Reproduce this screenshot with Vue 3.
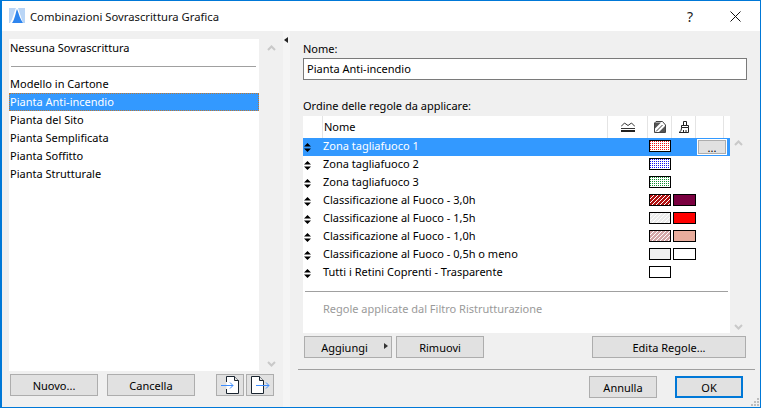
<template>
  <div class="win">
    <header class="title">
      <svg class="logo" width="16" height="16" viewBox="0 0 16 16"><path d="M0 0h16v15H0z" fill="#b9d5f6"/><path d="M1 15C4 11 5 4 7 0h2l5 15z" fill="#fff"/><path d="M3 15C6 11 6.500 5 8 1c2 5 3 10 6 14z" fill="#2e85ee"/></svg>
      <span class="title-text">Combinazioni Sovrascrittura Grafica</span>
      <span class="help">?</span>
      <svg class="close" width="11" height="11" viewBox="0 0 11 11"><path d="M.5.5l10 10M10.500.5l-10 10" stroke="#111" fill="none"/></svg>
    </header>
    <div class="body">
      <aside class="left">
        <div class="list-wrap">
          <div class="list">
            <div class="item first">Nessuna Sovrascrittura</div>
            <hr class="list-sep" />
            <div v-for="n in names" :key="n" class="item" :class="{ sel: n === 'Pianta Anti-incendio' }">{{ n }}</div>
          </div>
          <div class="scroll">
            <svg width="9" height="6" viewBox="0 0 9 6"><path d="M1 5 4.500 1.500 8 5" stroke="#c9c9c9" stroke-width="2" fill="none"/></svg>
            <svg width="9" height="6" viewBox="0 0 9 6"><path d="M1 1 4.500 4.500 8 1" stroke="#c9c9c9" stroke-width="2" fill="none"/></svg>
          </div>
        </div>
        <div class="left-btns">
          <button class="btn w88">Nuovo...</button>
          <button class="btn w88">Cancella</button>
          <span class="grow"></span>
          <button class="btn icon">
            <svg width="20" height="20" viewBox="0 0 20 20"><path d="M6.500 1.500h8l4 4v13h-12z" fill="#fff"/><path d="M6.500 7V1.500h8l4 4v13h-12V14" fill="none" stroke="#1a2530"/><path d="M14.500 1.500v4h4" fill="#e1e1e1" stroke="#1a2530"/><path d="M1 10.500h12M10 7.500l3 3-3 3" stroke="#3d8dff" fill="none"/></svg>
          </button>
          <button class="btn icon">
            <svg width="20" height="20" viewBox="0 0 20 20"><path d="M1.500 1.500h8l4 4v13h-12z" fill="#fff" stroke="#1a2530"/><path d="M9.500 1.500v4h4" fill="#e1e1e1" stroke="#1a2530"/><path d="M6 10.500h13M16 7.500l3 3-3 3" stroke="#3d8dff" fill="none"/></svg>
          </button>
        </div>
      </aside>
      <div class="splitter"><span class="tri"></span></div>
      <main class="right">
        <label class="lbl">Nome:</label>
        <div class="input">Pianta Anti-incendio</div>
        <label class="lbl order">Ordine delle regole da applicare:</label>
        <div class="table-wrap">
          <div class="table">
            <div class="thead">
              <span class="th c0"></span>
              <span class="th c1">Nome</span>
              <span class="th c2">
                <svg width="14" height="12" viewBox="0 0 14 12"><path d="M0 5.500 3.500 2 7 4.500 10.500 2 14 5.500M0 7.500h14" stroke="#333" fill="none"/><path d="M0 9h14v2H0z" fill="#222"/></svg>
              </span>
              <span class="th c3">
                <svg width="12" height="12" viewBox="0 0 12 12"><path d="M2 .5h6.500L11.500 4v7.500H.5V2z" fill="#fff" stroke="#444"/><path d="M1 1.500h6L1 7.500zM11 5v6H5z" fill="#555"/><path d="M2 10.500 8.500 4" stroke="#444" fill="none"/></svg>
              </span>
              <span class="th c4">
                <svg width="12" height="13" viewBox="0 0 12 13"><path d="M5.500 1.500h3v4h-3zM3.500 5.500h7v2h-7z" fill="#fff" stroke="#222"/><path d="M3.500 7.500h7v5h-9.500c2-1 2.500-3 2.500-5z" fill="#fff" stroke="#222"/><path d="M5.500 10v2M8 10v2" stroke="#222"/></svg>
              </span>
              <span class="th c5"></span>
            </div>
            <div v-for="(r, i) in rows" :key="r.name" class="row" :class="{ sel: i === 0 }">
              <svg class="updown" width="7" height="9" viewBox="0 0 7 9"><path d="M3.500 0 7 3.500H0zM3.500 9 0 5.500h7z" fill="#000"/></svg>
              <span class="name">{{ r.name }}</span>
              <span class="swatches">
                <span class="sw" :class="r.a">
                  <svg v-if="r.dot" width="20" height="10" shape-rendering="crispEdges">
                    <pattern :id="'dot' + i" width="2" height="2" patternUnits="userSpaceOnUse">
                      <rect width="1" height="1" :fill="r.dot" />
                    </pattern>
                    <rect width="20" height="10" :fill="'url(#dot' + i + ')'" />
                  </svg>
                  <svg v-if="r.hatch" width="20" height="10" shape-rendering="crispEdges">
                    <pattern :id="'hatch' + i" width="4" height="4" patternUnits="userSpaceOnUse">
                      <rect width="4" height="4" :fill="r.hatch" />
                      <path d="M3 0h1v1H3zM2 1h1v1H2zM1 2h1v1H1zM0 3h1v1H0z" fill="#fff" />
                    </pattern>
                    <rect width="20" height="10" :fill="'url(#hatch' + i + ')'" />
                  </svg>
                </span>
                <span v-if="r.b" class="sw wide" :class="r.b"></span>
              </span>
              <button v-if="i === 0" class="dots">...</button>
            </div>
            <hr class="tsep" />
            <div class="note">Regole applicate dal Filtro Ristrutturazione</div>
          </div>
          <div class="scroll tscroll">
            <svg width="9" height="6" viewBox="0 0 9 6"><path d="M1 5 4.500 1.500 8 5" stroke="#c9c9c9" stroke-width="2" fill="none"/></svg>
            <svg width="9" height="6" viewBox="0 0 9 6"><path d="M1 1 4.500 4.500 8 1" stroke="#c9c9c9" stroke-width="2" fill="none"/></svg>
          </div>
        </div>
        <div class="tbtns">
          <button class="btn w88 add">Aggiungi<span class="arrow"></span></button>
          <button class="btn w88">Rimuovi</button>
          <span class="grow"></span>
          <button class="btn edit">Edita Regole...</button>
        </div>
        <div class="foot">
          <button class="btn annulla">Annulla</button>
          <button class="btn ok">OK</button>
        </div>
        <svg class="grip" width="8" height="8" viewBox="0 0 8 8"><path d="M6 0h2v2H6zM3 3h2v2H3zM6 3h2v2H6zM0 6h2v2H0zM3 6h2v2H3zM6 6h2v2H6z" fill="#bdbdbd"/></svg>
      </main>
    </div>
  </div>
</template>

<script setup>
const names = ['Modello in Cartone', 'Pianta Anti-incendio', 'Pianta del Sito', 'Pianta Semplificata', 'Pianta Soffitto', 'Pianta Strutturale']
const rows = [
  { name: 'Zona tagliafuoco 1', dot: '#f01010' },
  { name: 'Zona tagliafuoco 2', dot: '#1010f0' },
  { name: 'Zona tagliafuoco 3', dot: '#109030' },
  { name: 'Classificazione al Fuoco - 3,0h', hatch: '#b01010', b: 'plum' },
  { name: 'Classificazione al Fuoco - 1,5h', hatch: '#ececec', b: 'red' },
  { name: 'Classificazione al Fuoco - 1,0h', hatch: '#d4a6a8', b: 'salmon' },
  { name: 'Classificazione al Fuoco - 0,5h o meno', a: 'grey', b: 'white' },
  { name: 'Tutti i Retini Coprenti - Trasparente', a: 'white' }
]
</script>

<style>
html, body { margin: 0; padding: 0; background: #f0f0f0; }
</style>

<style scoped>
.win { width: 761px; height: 408px; box-sizing: border-box; border: 1px solid #0078d7; border-width: 1px 1px 1px 2px; background: #f0f0f0; display: flex; flex-direction: column; font: 11px "Noto Sans", sans-serif; color: #000; overflow: hidden; }
.title { height: 30px; flex: none; background: #fff; display: flex; align-items: center; padding-left: 7px; }
.logo { margin-right: 5px; }
.title-text { font-size: 11.250px; color: #111; flex: 1; }
.help { font-size: 14px; margin-right: 37px; color: #222; }
.close { margin-right: 19px; }
.body { flex: 1; display: flex; min-height: 0; }
.left { width: 281px; flex: none; padding: 8px 0 0 7px; box-sizing: border-box; display: flex; flex-direction: column; }
.list-wrap { height: 332px; display: flex; flex: none; }
.list { width: 250px; background: #fff; flex: none; }
.item { height: 18px; line-height: 18px; padding-left: 1px; white-space: nowrap; box-sizing: border-box; }
.item.sel { background: #3399ff; color: #fff; outline: 1px dotted #c07830; outline-offset: -1px; }
.list-sep { border: 0; border-top: 1px solid #a0a0a0; margin: 9px 3px 8px 2px; height: 0; }
.scroll { width: 24px; display: flex; flex-direction: column; justify-content: space-between; align-items: center; padding: 6px 0 4px; box-sizing: border-box; }
.left-btns { display: flex; align-items: center; margin-top: 3px; padding-left: 1px; padding-right: 9px; }
.btn { height: 22px; box-sizing: border-box; border: 1px solid #adadad; background: #e1e1e1; font: inherit; color: #000; padding: 0; display: inline-flex; align-items: center; justify-content: center; }
.w88 { width: 88px; }
.left-btns .w88 + .w88 { margin-left: 9px; }
.icon { width: 28px; margin-left: 2px; }
.grow { flex: 1; }
.splitter { width: 7px; flex: none; background: #f5f5f5; position: relative; }
.tri { position: absolute; left: 1px; top: 6px; border: 3.500px solid transparent; border-left-width: 0; border-right: 4px solid #222; }
.right { flex: 1; min-width: 0; padding: 11px 13px 0 13px; display: flex; flex-direction: column; position: relative; }
.lbl { display: block; height: 16px; line-height: 14px; }
.input { width: 444px; height: 22px; box-sizing: border-box; border: 1px solid #7a7a7a; background: #fff; line-height: 20px; padding-left: 3px; flex: none; }
.order { margin-top: 19px; height: 17px; }
.table-wrap { display: flex; height: 217px; flex: none; width: 444px; }
.table { width: 427px; flex: none; background: #fff; position: relative; }
.tscroll { width: 17px; padding: 24px 0 3px; }
.thead { display: flex; height: 22px; align-items: center; background: #fff; }
.th { height: 22px; padding-bottom: 1px; box-sizing: border-box; border-right: 1px solid #e4e4e4; display: flex; align-items: center; justify-content: center; flex: none; }
.c0 { width: 20px; }
.c1 { width: 285px; justify-content: flex-start; padding-left: 1px; padding-bottom: 2px; }
.c2 { width: 40px; }
.c3 { width: 24px; }
.c4 { width: 24px; }
.c5 { width: 28px; }
.row { height: 18px; display: flex; align-items: center; position: relative; white-space: nowrap; }
.row.sel { background: #3399ff; color: #fff; }
.updown { margin-left: 1px; width: 7px; flex: none; }
.name { width: 326px; margin-left: 12px; flex: none; line-height: 16px; padding-bottom: 2px; }
.swatches { display: flex; gap: 2px; margin-bottom: 2px; }
.sw { width: 22px; height: 12px; box-sizing: border-box; border: 1px solid #000; display: block; background-color: #fff; }
.sw svg { display: block; }
.sw.wide { width: 23px; }
.plum { background: #7a0040; }
.red { background: #ff0000; }
.salmon { background: #e8ac9c; }
.grey { background: #f0f0f0; }
.white { background: #fff; }
.dots { position: absolute; left: 394px; top: 1px; width: 30px; height: 16px; box-sizing: border-box; border: 2px solid #adadad; outline: 1px solid #fff; outline-offset: -1px; background: #e1e1e1; font: inherit; padding: 0; color: #000; line-height: 14px; }
.tsep { border: 0; border-top: 1px solid #a0a0a0; margin: 9px 2px 0 2px; height: 0; }
.note { color: #9a9a9a; padding-left: 20px; margin-top: 10px; line-height: 14px; }
.tbtns { display: flex; align-items: center; margin-top: 3px; width: 443px; padding-left: 1px; box-sizing: border-box; }
.tbtns .w88 + .w88 { margin-left: 4px; }
.add { position: relative; padding-right: 7px; }
.arrow { position: absolute; right: 3px; top: 6px; border: 3.500px solid transparent; border-right-width: 0; border-left: 4px solid #333; }
.edit { width: 154px; }
.foot { margin: 11px -8px 0 -5px; border-top: 1px solid #a0a0a0; padding-top: 6px; padding-right: 12px; display: flex; justify-content: flex-end; gap: 18px; }
.annulla { width: 68px; }
.ok { width: 68px; border: 2px solid #0078d7; }
.grip { position: absolute; right: 1px; bottom: 1px; }
</style>
